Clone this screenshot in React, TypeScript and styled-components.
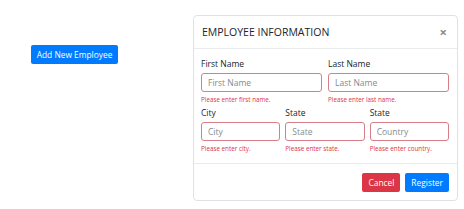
import styled, { createGlobalStyle } from "styled-components";

const GlobalStyle = createGlobalStyle`
  html, body {
    margin: 0;
    padding: 0;
    background: #fff;
  }
  body {
    font-family: "Open Sans", "Noto Sans", sans-serif;
    color: #212529;
  }
`;

const Page = styled.div`
  display: flex;
  align-items: flex-start;
  padding: 15px 0 0 31px;
`;

const Button = styled.button<{ $variant?: "primary" | "danger" }>`
  height: 19px;
  padding: 0 6px;
  border: none;
  border-radius: 2px;
  font-family: inherit;
  font-size: 8.4px;
  line-height: 19px;
  color: #fff;
  background: ${(p) => (p.$variant === "danger" ? "#dc3545" : "#007bff")};
  cursor: pointer;
`;

const AddButton = styled(Button)`
  width: 87px;
  margin-top: 30px;
  padding: 0;
`;

const Modal = styled.div`
  margin-left: 75px;
  width: 265px;
  height: 186px;
  box-sizing: border-box;
  border: 1px solid #dee2e6;
  border-radius: 4px;
  background: #fff;
  display: flex;
  flex-direction: column;
`;

const Header = styled.div`
  display: flex;
  align-items: center;
  justify-content: space-between;
  height: 32px;
  padding: 0 10px 0 8px;
  border-bottom: 1px solid #e9ecef;
`;

const Title = styled.h5`
  margin: 0;
  font-size: 10.5px;
  font-weight: 400;
`;

const Close = styled.span`
  font-size: 13px;
  font-weight: 700;
  color: #8a8a8a;
  line-height: 1;
`;

const Body = styled.div`
  flex: 1;
  padding: 8px 8px 0 7px;
  display: flex;
  flex-direction: column;
`;

const Row = styled.div<{ $cols: number; $top?: number }>`
  display: grid;
  grid-template-columns: repeat(${(p) => p.$cols}, 1fr);
  column-gap: ${(p) => (p.$cols === 2 ? 6 : 5)}px;
  margin-top: ${(p) => p.$top ?? 0}px;
`;

const Field = styled.div`
  display: flex;
  flex-direction: column;
`;

const Label = styled.label`
  font-size: 8.5px;
  line-height: 13px;
  margin-bottom: 3px;
`;

const Input = styled.input`
  box-sizing: border-box;
  width: 100%;
  height: 19px;
  padding: 0 6px;
  border: 1px solid #d77e88;
  border-radius: 3px;
  font-family: inherit;
  font-size: 8.5px;
  color: #495057;
  outline: none;
  &::placeholder {
    color: #858b91;
  }
`;

const Error = styled.div`
  font-size: 6.3px;
  line-height: 10px;
  margin-top: 3px;
  color: #dc3545;
`;

const Footer = styled.div`
  display: flex;
  justify-content: flex-end;
  gap: 5px;
  padding: 9px 8px 8px;
  border-top: 1px solid #e9ecef;
`;

const fields1 = [
  { label: "First Name", ph: "First Name", err: "Please enter first name." },
  { label: "Last Name", ph: "Last Name", err: "Please enter last name." },
];

const fields2 = [
  { label: "City", ph: "City", err: "Please enter city." },
  { label: "State", ph: "State", err: "Please enter state." },
  { label: "State", ph: "Country", err: "Please enter country." },
];

export default function App() {
  return (
    <>
      <GlobalStyle />
      <Page>
        <AddButton>Add New Employee</AddButton>
        <Modal>
          <Header>
            <Title>EMPLOYEE INFORMATION</Title>
            <Close>×</Close>
          </Header>
          <Body>
            <Row $cols={2}>
              {fields1.map((f) => (
                <Field key={f.ph}>
                  <Label>{f.label}</Label>
                  <Input placeholder={f.ph} />
                  <Error>{f.err}</Error>
                </Field>
              ))}
            </Row>
            <Row $cols={3} $top={1}>
              {fields2.map((f) => (
                <Field key={f.ph}>
                  <Label>{f.label}</Label>
                  <Input placeholder={f.ph} />
                  <Error>{f.err}</Error>
                </Field>
              ))}
            </Row>
          </Body>
          <Footer>
            <Button $variant="danger">Cancel</Button>
            <Button>Register</Button>
          </Footer>
        </Modal>
      </Page>
    </>
  );
}
